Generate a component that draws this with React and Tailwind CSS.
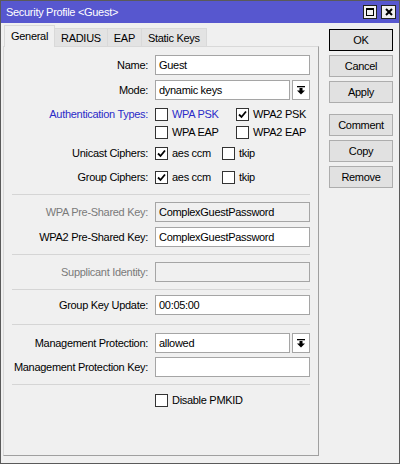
import { useState } from 'react';

// Icono de casilla marcada
function Check() {
  return (
    <svg width="9" height="9" viewBox="0 0 9 9">
      <path d="M1 4.5 L3.5 7 L8 1.5" fill="none" stroke="#000" strokeWidth="1.8" />
    </svg>
  );
}

function Checkbox({ checked, onClick }) {
  return (
    <span
      onClick={onClick}
      className="w-[13px] h-[13px] bg-white border border-[#333] flex items-center justify-center shrink-0"
    >
      {checked && <Check />}
    </span>
  );
}

function CheckItem({ checked, label, width, color = 'text-black' }) {
  const [on, setOn] = useState(checked);
  return (
    <div className="flex items-center" style={{ width }}>
      <Checkbox checked={on} onClick={() => setOn(!on)} />
      <span className={`ml-[4px] ${color}`}>{label}</span>
    </div>
  );
}

// Flecha del desplegable
function DropArrow() {
  return (
    <svg width="8" height="9" viewBox="0 0 8 9">
      <rect x="0" y="0" width="8" height="1.3" fill="#000" />
      <rect x="2.5" y="2" width="3" height="3" fill="#000" />
      <path d="M0 4.5 L8 4.5 L4 8.5 Z" fill="#000" />
    </svg>
  );
}

function Row({ label, mt, labelClass = 'text-black', children }) {
  return (
    <div className="flex items-center" style={{ marginTop: mt }}>
      <div className={`w-[144px] text-right ${labelClass}`}>{label}</div>
      <div className="ml-[7px] flex items-center">{children}</div>
    </div>
  );
}

function Field({ value, disabled, width = 155 }) {
  return (
    <div
      className={`h-[20px] border border-[#a5a5a5] flex items-center pl-[3px] ${disabled ? 'bg-[#f0f0f0]' : 'bg-white'}`}
      style={{ width }}
    >
      {value}
    </div>
  );
}

function Select({ value }) {
  return (
    <div className="flex items-center">
      <Field value={value} width={135} />
      <div className="ml-[2px] w-[18px] h-[20px] border border-[#a5a5a5] bg-white flex items-center justify-center">
        <DropArrow />
      </div>
    </div>
  );
}

function Separator({ mt }) {
  return <div className="ml-[8px] w-[298px] border-t border-[#d5d5d5]" style={{ marginTop: mt }} />;
}

function Button({ children, primary, mt }) {
  return (
    <button
      className={`w-[64px] h-[22px] bg-[#e1e1e1] border ${primary ? 'border-black' : 'border-[#adadad]'} flex items-center justify-center`}
      style={{ marginTop: mt }}
    >
      {children}
    </button>
  );
}

export default function App() {
  const tabs = ['General', 'RADIUS', 'EAP', 'Static Keys'];
  const [tab, setTab] = useState('General');

  return (
    <div className="w-[400px] h-[464px] bg-[#f0f0f0] border border-[#5a5a5a] flex flex-col font-['Liberation_Sans',Arial,sans-serif] text-[11px] tracking-[-0.3px] text-black overflow-hidden">
      {/* Barra de título */}
      <div className="h-[22px] bg-[#5757cf] flex items-center justify-between pl-[5px] pr-[3px] shrink-0">
        <span className="text-white">Security Profile &lt;Guest&gt;</span>
        <div className="flex gap-[4px]">
          <div className="w-[14px] h-[14px] bg-[#f0f0f0] border border-[#222] flex items-center justify-center">
            <div className="w-[8px] h-[8px] border border-black border-t-2" />
          </div>
          <div className="w-[15px] h-[14px] bg-[#f0f0f0] border border-[#222] flex items-center justify-center">
            <svg width="8" height="8" viewBox="0 0 8 8">
              <path d="M1 1 L7 7 M7 1 L1 7" stroke="#000" strokeWidth="2" />
            </svg>
          </div>
        </div>
      </div>

      <div className="flex-1 flex pt-[2px] pl-[2px]">
        {/* Panel izquierdo con pestañas */}
        <div className="w-[316px] flex flex-col">
          <div className="h-[21px] flex items-end pl-[1px] shrink-0">
            {tabs.map((t) =>
              t === tab ? (
                <div
                  key={t}
                  onClick={() => setTab(t)}
                  className="h-[22px] px-[6px] bg-[#f0f0f0] border border-b-0 border-[#d9d9d9] flex items-center -mb-[1px] relative"
                >
                  {t}
                </div>
              ) : (
                <div
                  key={t}
                  onClick={() => setTab(t)}
                  className="h-[18px] px-[6px] bg-[#e3e3e3] border border-b-0 border-l-0 border-[#d9d9d9] flex items-center pt-[1px]"
                >
                  {t}
                </div>
              )
            )}
          </div>

          <div className="flex-1 mb-[7px] border border-t-[#d9d9d9] border-l-[#d9d9d9] border-r-[#a0a0a0] border-b-[#a0a0a0]">
            <Row label="Name:" mt={8}>
              <Field value="Guest" />
            </Row>
            <Row label="Mode:" mt={5}>
              <Select value="dynamic keys" />
            </Row>

            {/* Tipos de autenticación */}
            <div className="flex items-start mt-[5px]">
              <div className="w-[144px] h-[18px] text-right text-[#2b2bc8] flex items-center justify-end">
                Authentication Types:
              </div>
              <div className="ml-[7px] flex flex-col">
                <div className="h-[18px] flex items-center">
                  <CheckItem label="WPA PSK" width={81} color="text-[#2b2bc8]" />
                  <CheckItem label="WPA2 PSK" checked />
                </div>
                <div className="h-[18px] flex items-center">
                  <CheckItem label="WPA EAP" width={81} />
                  <CheckItem label="WPA2 EAP" />
                </div>
              </div>
            </div>

            <Row label="Unicast Ciphers:" mt={3}>
              <div className="h-[18px] flex items-center">
                <CheckItem label="aes ccm" checked width={67} />
                <CheckItem label="tkip" />
              </div>
            </Row>
            <Row label="Group Ciphers:" mt={6}>
              <div className="h-[18px] flex items-center">
                <CheckItem label="aes ccm" checked width={67} />
                <CheckItem label="tkip" />
              </div>
            </Row>

            <Separator mt={8} />
            <Row label="WPA Pre-Shared Key:" mt={7} labelClass="text-[#7a7a7a]">
              <Field value="ComplexGuestPassword" disabled />
            </Row>
            <Row label="WPA2 Pre-Shared Key:" mt={5}>
              <Field value="ComplexGuestPassword" />
            </Row>

            <Separator mt={7} />
            <Row label="Supplicant Identity:" mt={7} labelClass="text-[#7a7a7a]">
              <Field value="" disabled />
            </Row>

            <Separator mt={7} />
            <Row label="Group Key Update:" mt={5}>
              <Field value="00:05:00" />
            </Row>

            <Separator mt={9} />
            <Row label="Management Protection:" mt={8}>
              <Select value="allowed" />
            </Row>
            <Row label="Management Protection Key:" mt={4}>
              <Field value="" />
            </Row>

            <Separator mt={7} />
            <div className="flex items-center h-[18px] mt-[6px] pl-[151px]">
              <CheckItem label="Disable PMKID" />
            </div>
          </div>
        </div>

        {/* Botones de acción */}
        <div className="ml-[10px] pt-[4px] flex flex-col">
          <Button primary>OK</Button>
          <Button mt={4}>Cancel</Button>
          <Button mt={4}>Apply</Button>
          <Button mt={11}>Comment</Button>
          <Button mt={4}>Copy</Button>
          <Button mt={4}>Remove</Button>
        </div>
      </div>
    </div>
  );
}
